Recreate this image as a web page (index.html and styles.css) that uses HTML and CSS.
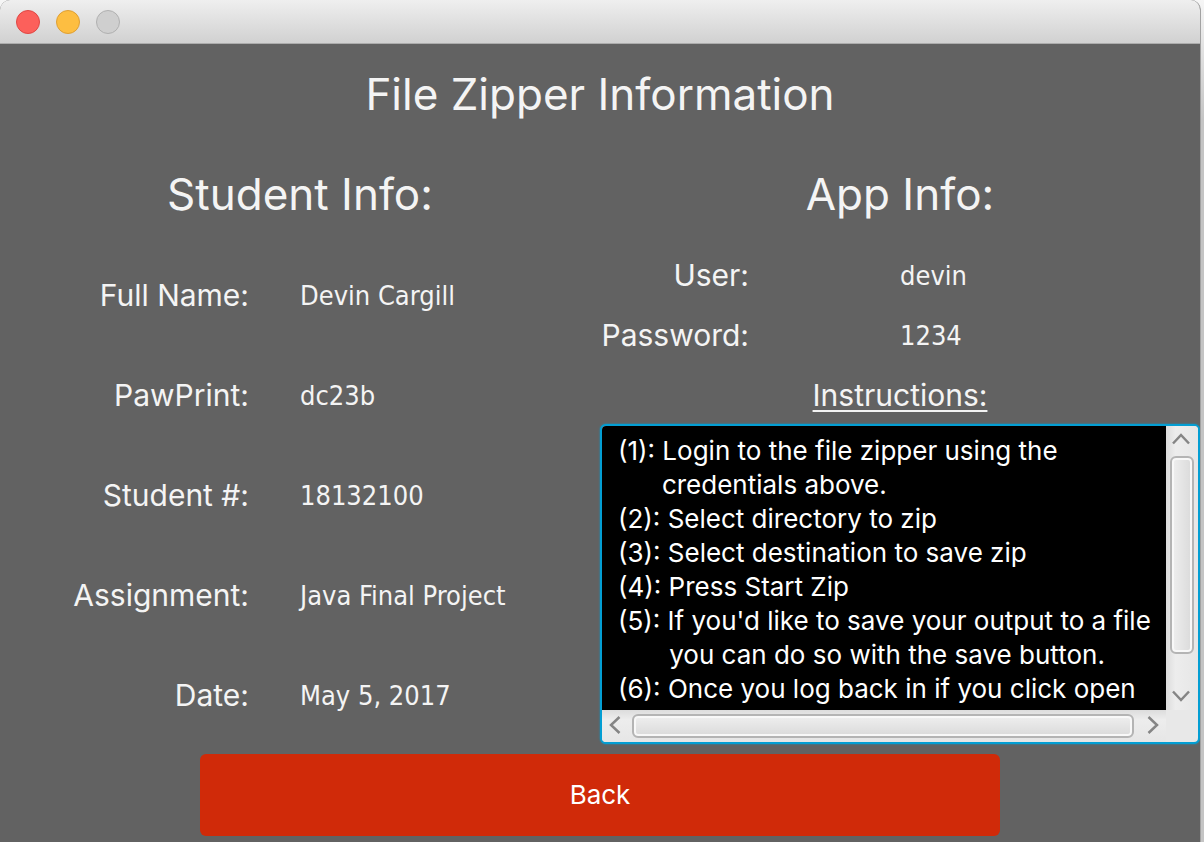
FILE: index.html
```html
<!DOCTYPE html>
<html lang="en">
<head>
<meta charset="utf-8">
<title>File Zipper Information</title>
<link rel="stylesheet" href="styles.css">
</head>
<body>
<div class="window">
  <header class="titlebar">
    <button class="light light-close" type="button" aria-label="Close"></button>
    <button class="light light-minimize" type="button" aria-label="Minimize"></button>
    <button class="light light-zoom" type="button" aria-label="Zoom" disabled></button>
  </header>
  <main class="content">
    <h1 class="heading">File Zipper Information</h1>
    <div class="columns">
      <section class="student">
        <h2 class="heading">Student Info:</h2>
        <dl class="info-list">
          <div class="row"><dt class="label">Full Name:</dt><dd class="value">Devin Cargill</dd></div>
          <div class="row"><dt class="label">PawPrint:</dt><dd class="value">dc23b</dd></div>
          <div class="row"><dt class="label">Student #:</dt><dd class="value">18132100</dd></div>
          <div class="row"><dt class="label">Assignment:</dt><dd class="value">Java Final Project</dd></div>
          <div class="row"><dt class="label">Date:</dt><dd class="value">May 5, 2017</dd></div>
        </dl>
      </section>
      <section class="app">
        <h2 class="heading">App Info:</h2>
        <dl class="info-list">
          <div class="app-row"><dt class="label">User:</dt><dd class="value">devin</dd></div>
          <div class="app-row"><dt class="label">Password:</dt><dd class="value">1234</dd></div>
        </dl>
        <label class="instructions-label" for="instructions">Instructions:</label>
        <div class="scrollpane">
          <textarea class="instructions" id="instructions" wrap="off" readonly>(1): Login to the file zipper using the
      credentials above.
(2): Select directory to zip
(3): Select destination to save zip
(4): Press Start Zip
(5): If you'd like to save your output to a file
       you can do so with the save button.
(6): Once you log back in if you click open</textarea>
          <div class="bar bar-vertical">
            <button class="arrow arrow-up" type="button" aria-label="Scroll up"><svg width="18" height="12" viewBox="0 0 18 12"><path d="M1 10.500L9 2L17 10.500"/></svg></button>
            <div class="thumb thumb-vertical"></div>
            <button class="arrow arrow-down" type="button" aria-label="Scroll down"><svg width="18" height="12" viewBox="0 0 18 12"><path d="M1 1.500L9 10L17 1.500"/></svg></button>
          </div>
          <div class="bar bar-horizontal">
            <button class="arrow arrow-left" type="button" aria-label="Scroll left"><svg width="12" height="18" viewBox="0 0 12 18"><path d="M10.500 1L2 9L10.500 17"/></svg></button>
            <div class="thumb thumb-horizontal"></div>
            <button class="arrow arrow-right" type="button" aria-label="Scroll right"><svg width="12" height="18" viewBox="0 0 12 18"><path d="M1.500 1L10 9L1.500 17"/></svg></button>
          </div>
        </div>
      </section>
    </div>
    <button class="back" type="button">Back</button>
  </main>
</div>
</body>
</html>
```
FILE: styles.css
```css
* { box-sizing: border-box; }

body {
  margin: 0;
  padding-right: 3px;
  background: linear-gradient(#f6f6f6, #c4c4c4 120px);
  font-family: Inter, "Liberation Sans", sans-serif;
  color: #f4f4f4;
}

.window {
  display: flex;
  flex-direction: column;
  min-height: 100vh;
  border-right: 1px solid #a2a2a2;
  border-radius: 10px 10px 0 0;
  overflow: hidden;
  background: #626262;
}

.titlebar {
  display: flex;
  gap: 16px;
  height: 44px;
  padding: 10px 16px;
  border-bottom: 1px solid #acacac;
  background: linear-gradient(#efefef, #d1d1d1);
}

.light {
  width: 24px;
  height: 24px;
  padding: 0;
  border: 1px solid;
  border-radius: 50%;
}
.light-close { background: #fc605b; border-color: #df4744; }
.light-minimize { background: #fdbe41; border-color: #de9f34; }
.light-zoom { background: #cfcfcf; border-color: #b0b0b0; }

.content {
  display: flex;
  flex-direction: column;
  flex: 1;
}

.heading {
  margin: 0;
  font-size: 44px;
  font-weight: 400;
  line-height: 100px;
  text-align: center;
}

.columns {
  display: grid;
  grid-template-columns: minmax(0, 1fr) minmax(0, 1fr);
}

.info-list {
  margin: 0;
  padding-top: 2px;
}

.row, .app-row {
  display: grid;
  align-items: start;
}
.row {
  grid-template-columns: 249px 1fr;
  column-gap: 51px;
  line-height: 100px;
}
.app-row {
  grid-template-columns: 149px 1fr;
  column-gap: 151px;
  line-height: 60px;
}

.label {
  font-size: 30px;
  text-align: right;
  white-space: nowrap;
}
.row .label { line-height: 98px; }
.app-row .label { line-height: 58px; }

.value {
  margin: 0;
  font-family: "DejaVu Sans Condensed", "DejaVu Sans", sans-serif;
  font-size: 27px;
  white-space: nowrap;
}

.app {
  display: flex;
  flex-direction: column;
}

.instructions-label {
  font-size: 30px;
  line-height: 58px;
  text-align: center;
  text-decoration: underline;
  text-decoration-thickness: 2px;
  text-underline-offset: 4px;
}

.scrollpane {
  display: grid;
  grid-template-columns: minmax(0, 1fr) 32px;
  grid-template-rows: 284px 32px;
  border: 2px solid #039ed3;
  border-radius: 6px;
  box-shadow: 0 0 2px #039ed3;
  overflow: hidden;
  background: #e8e8e8;
}

.instructions {
  width: 100%;
  height: 100%;
  padding: 8px 16px 0;
  border: 0;
  outline: 0;
  resize: none;
  overflow: hidden;
  background: #000;
  color: #fff;
  font-family: inherit;
  font-size: 26px;
  line-height: 34px;
  white-space: pre;
}

.bar {
  display: flex;
  align-items: center;
}
.bar-vertical {
  flex-direction: column;
  background: linear-gradient(90deg, #dcdcdc, #ededed 30%, #e6e6e6);
}
.bar-horizontal { background: linear-gradient(#dcdcdc, #ededed 30%, #e6e6e6); }

.arrow {
  display: flex;
  flex: 0 0 30px;
  align-items: center;
  justify-content: center;
  padding: 0;
  border: 0;
  background: none;
}
.arrow-up { padding: 0 2px 4px 0; }
.arrow-down { padding: 2px 2px 0 0; }
.arrow-left { padding: 0 4px 2px 0; }
.arrow-right { padding: 0 0 2px 4px; }
.arrow path {
  fill: none;
  stroke: #858585;
  stroke-width: 2.5;
}

.thumb {
  border: 2px solid #b4b4b4;
  border-radius: 6px;
  box-shadow: inset 0 0 0 2px #f8f8f8;
}
.thumb-vertical {
  width: 24px;
  height: 198px;
  margin-bottom: auto;
  background: linear-gradient(90deg, #efefef, #dadada);
}
.thumb-horizontal {
  flex: 1;
  height: 24px;
  margin-right: 2px;
  background: linear-gradient(#efefef, #dadada);
}

.back {
  align-self: center;
  width: 66.67%;
  height: 82px;
  margin: 8px 0 6px;
  padding: 0 0 2px;
  border: 0;
  border-radius: 6px;
  background: #d02a09;
  color: #fff;
  font-family: inherit;
  font-size: 26px;
}
```
